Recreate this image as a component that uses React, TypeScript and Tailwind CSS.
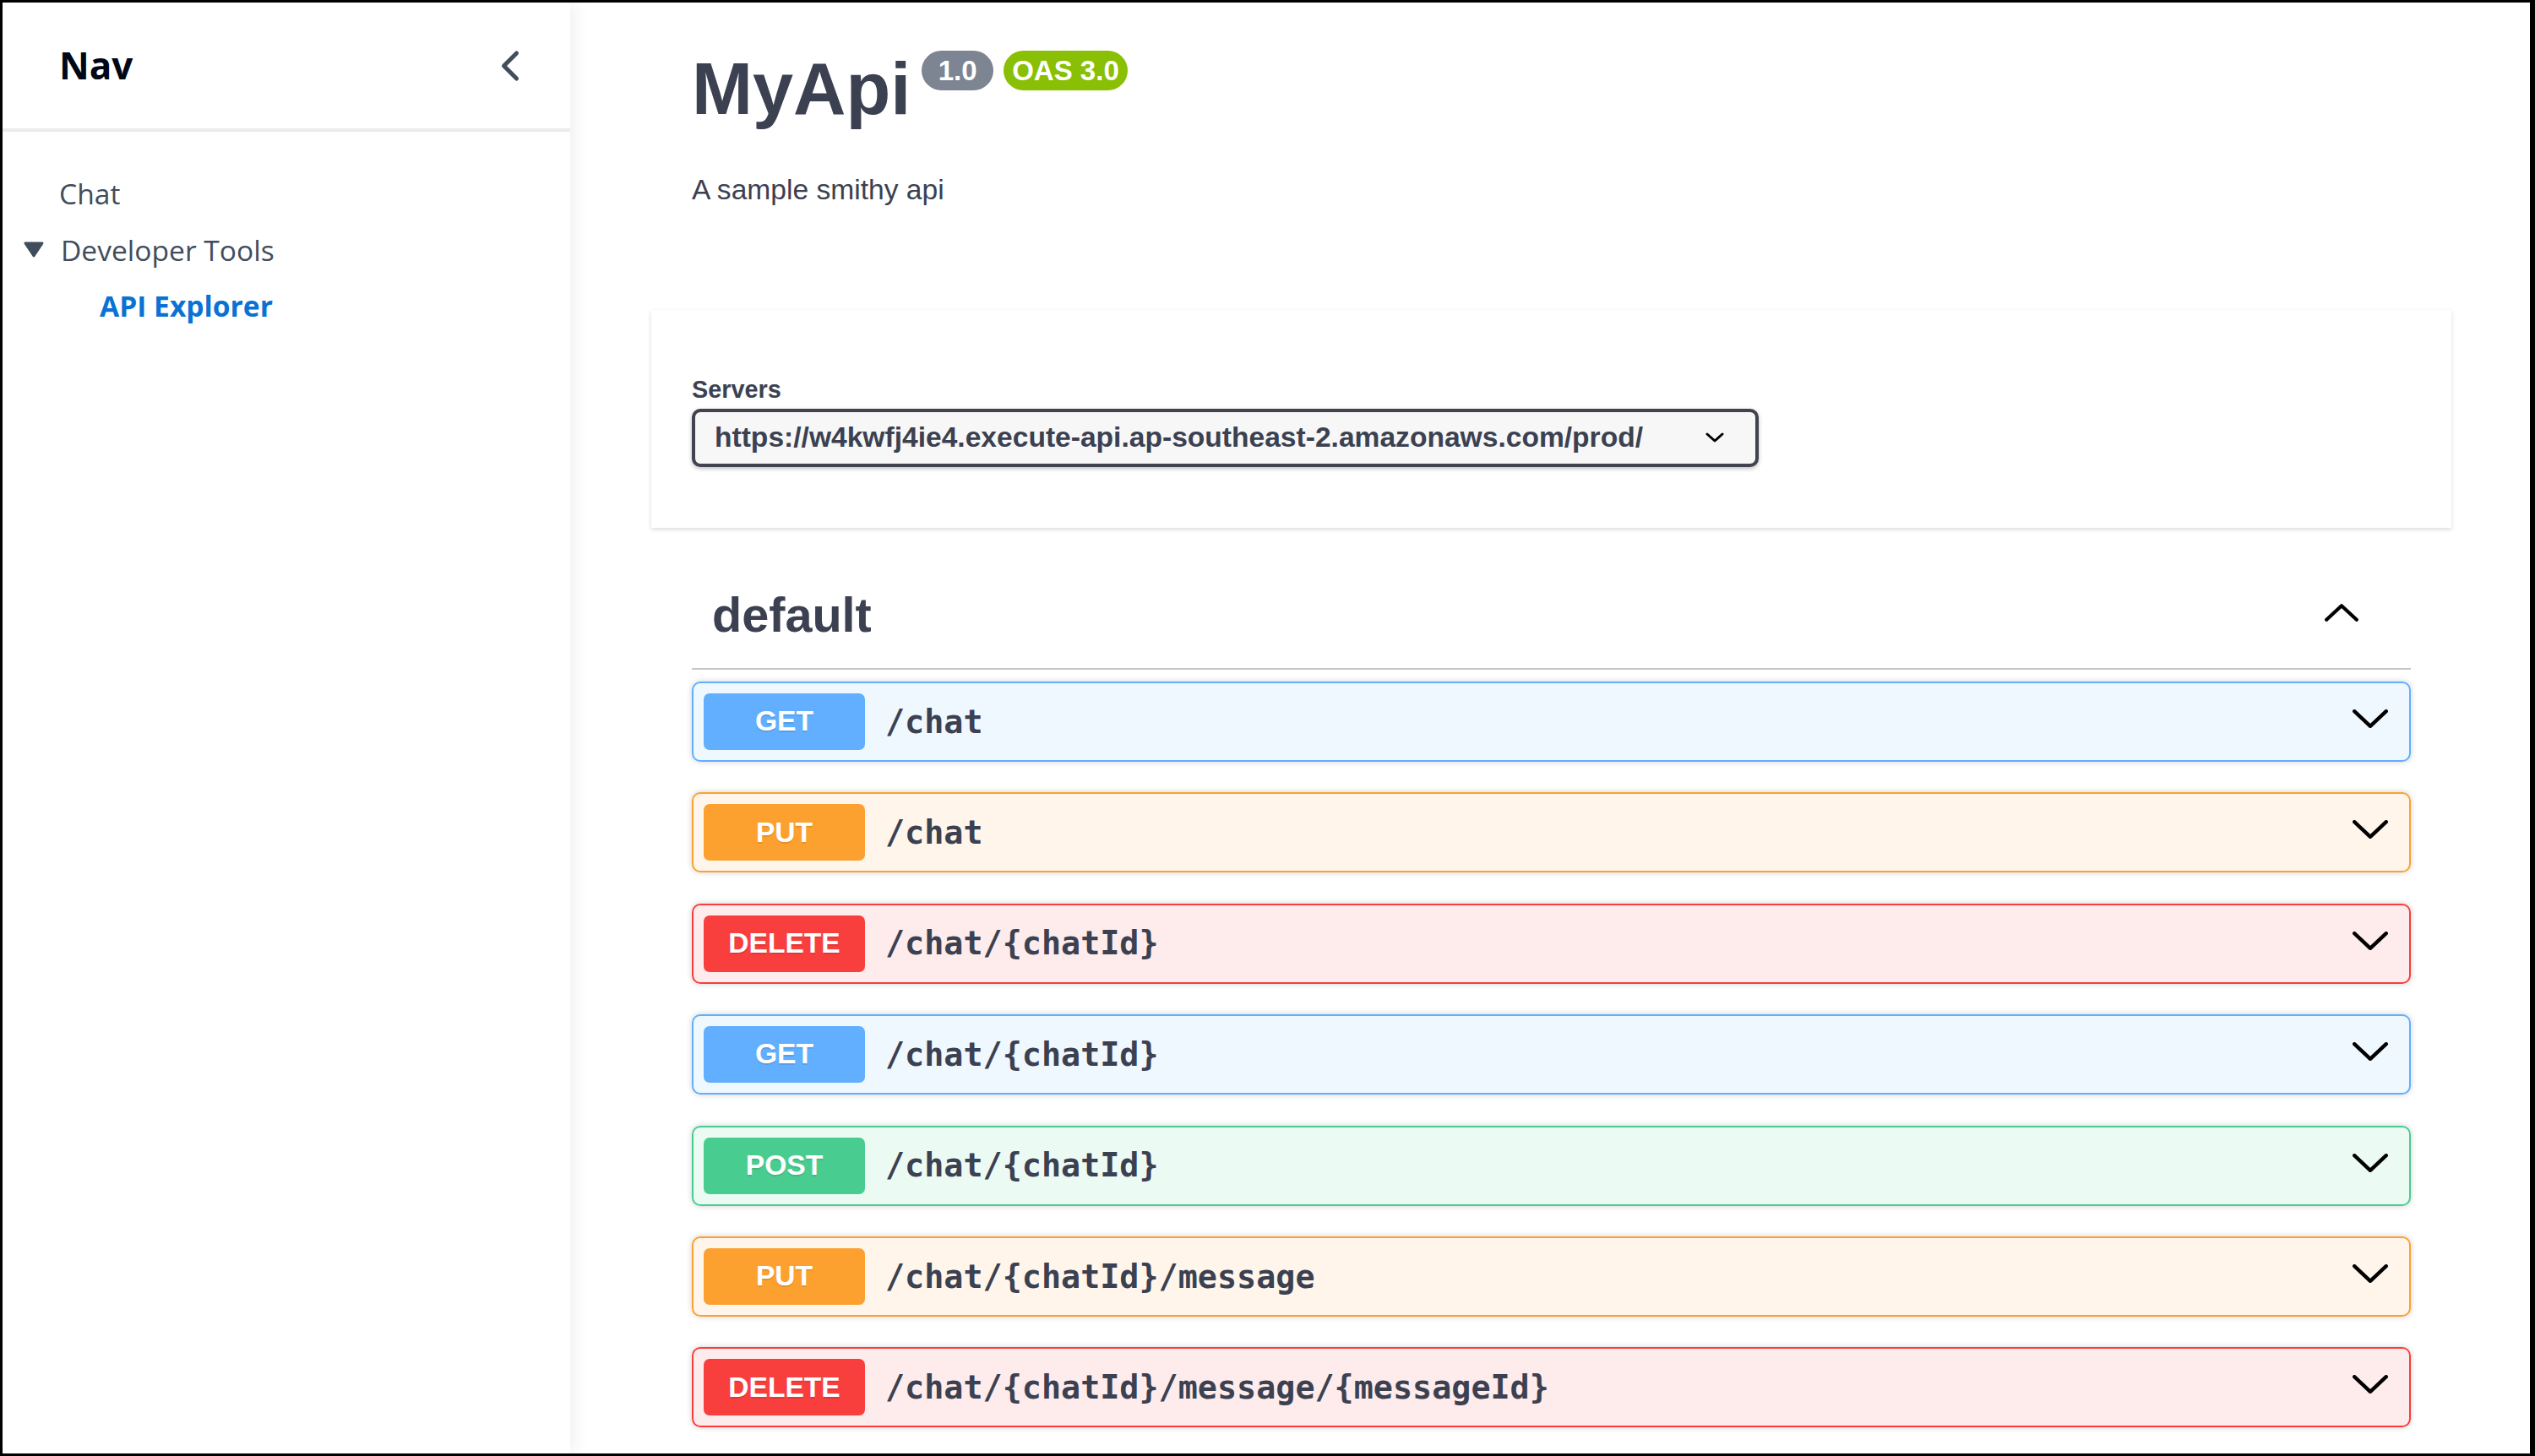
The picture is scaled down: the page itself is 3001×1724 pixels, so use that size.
import React from "react";

type Op = { method: "GET" | "PUT" | "DELETE" | "POST"; path: string };

const ops: Op[] = [
  { method: "GET", path: "/chat" },
  { method: "PUT", path: "/chat" },
  { method: "DELETE", path: "/chat/{chatId}" },
  { method: "GET", path: "/chat/{chatId}" },
  { method: "POST", path: "/chat/{chatId}" },
  { method: "PUT", path: "/chat/{chatId}/message" },
  { method: "DELETE", path: "/chat/{chatId}/message/{messageId}" },
];

const look = {
  GET: { box: "border-[#61affe] bg-[rgba(97,175,254,0.1)]", badge: "bg-[#61affe]" },
  PUT: { box: "border-[#fca130] bg-[rgba(252,161,48,0.1)]", badge: "bg-[#fca130]" },
  DELETE: { box: "border-[#f93e3e] bg-[rgba(249,62,62,0.1)]", badge: "bg-[#f93e3e]" },
  POST: { box: "border-[#49cc90] bg-[rgba(73,204,144,0.1)]", badge: "bg-[#49cc90]" },
};

const Sidebar = () => {
  return (
    <div className="w-[672px] shrink-0 h-full bg-white shadow-[6px_0_18px_rgba(0,7,22,0.06)] z-10 font-['Open_Sans',sans-serif]">
      <div className="h-[149px] flex items-center justify-between pl-[67px] pr-[51px]">
        <p className="text-[44px] leading-[52.8px] font-bold text-[#000716]">Nav</p>
        <svg width="40" height="40" viewBox="0 0 16 16" fill="none">
          <polyline points="11 2 5 8 11 14" stroke="#414d5c" strokeWidth="2" strokeLinecap="round" strokeLinejoin="round" />
        </svg>
      </div>
      <div className="h-[4px] bg-[#e9ebed]" />
      <div className="pt-[53px] flex flex-col gap-[26.5px] text-[33.6px] leading-[40px] text-[#414d5c]">
        <p className="pl-[67px]">Chat</p>
        <div className="flex items-center pl-[25px]">
          <svg width="24" height="19" viewBox="0 0 24 19" className="mr-[20px]">
            <path d="M2 2 H22 L12 17 Z" fill="#414d5c" stroke="#414d5c" strokeWidth="3" strokeLinejoin="round" />
          </svg>
          <p>Developer Tools</p>
        </div>
        <p className="pl-[115px] font-bold text-[#0972d3]">API Explorer</p>
      </div>
    </div>
  );
};

const OpBlock = ({ op }: { op: Op }) => {
  const s = look[op.method];
  return (
    <div className={`border-2 rounded-[10px] shadow-[0_0_7px_rgba(0,0,0,0.19)] ${s.box}`}>
      <div className="flex items-center p-[12px]">
        <div
          className={`w-[191px] h-[67px] rounded-[7px] flex items-center justify-center text-white font-bold text-[33.6px] [text-shadow:0_2px_0_rgba(0,0,0,0.1)] ${s.badge}`}
        >
          {op.method}
        </div>
        <p className="flex-1 pl-[24px] font-['DejaVu_Sans_Mono',monospace] font-bold text-[38.4px] text-[#3b4151]">
          {op.path}
        </p>
        <svg width="42" height="22" viewBox="0 0 42 22" fill="none" className="self-start mt-[19px] mr-[13px]">
          <polyline points="2.2,2.2 21,19.8 39.8,2.2" stroke="#000" strokeWidth="4.4" strokeLinecap="round" strokeLinejoin="round" />
        </svg>
      </div>
    </div>
  );
};

export default function App() {
  return (
    <div className="w-[3001px] h-[1724px] overflow-hidden border-t-[3px] border-l-[3px] border-b-[3px] border-r-[6px] border-black bg-white flex">
      <Sidebar />
      <div className="flex-1 pl-[96px] pr-[93px] font-['Liberation_Sans',Arial,sans-serif] text-[#3b4151]">
        <div className="px-[48px] pt-[57px]">
          <div className="flex items-start">
            <h2 className="mt-[2px] text-[86.4px] leading-[86.4px] font-bold">MyApi</h2>
            <span className="ml-[13px] w-[85px] h-[47px] rounded-full bg-[#7d8492] text-white font-bold text-[33px] flex items-center justify-center">
              1.0
            </span>
            <span className="ml-[12px] h-[47px] px-[10px] rounded-full bg-[#89bf04] text-white font-bold text-[33px] flex items-center">
              OAS 3.0
            </span>
          </div>
          <p className="mt-[57.6px] text-[33.6px] leading-[38.6px]">A sample smithy api</p>
        </div>

        <div className="mt-[122.4px] bg-white shadow-[0_2px_5px_rgba(0,0,0,0.15)] px-[48px] pt-[72px] pb-[72px]">
          <p className="pt-[6px] mb-[6px] text-[28.8px] leading-[33px] font-bold">Servers</p>
          <div className="w-[1263px] h-[69px] border-4 border-[#41444e] rounded-[10px] bg-[#f7f7f7] shadow-[0_2px_5px_rgba(0,0,0,0.25)] flex items-center justify-between pl-[23px]">
            <span className="text-[33.6px] font-bold">https://w4kwfj4ie4.execute-api.ap-southeast-2.amazonaws.com/prod/</span>
            <svg width="22" height="12" viewBox="0 0 22 12" fill="none" className="mr-[37px]">
              <polyline points="2,2 11,10 20,2" stroke="#000" strokeWidth="3" strokeLinecap="round" strokeLinejoin="round" />
            </svg>
          </div>
        </div>

        <div className="px-[48px]">
          <div className="mt-[34px] h-[134px] border-b-2 border-[#c4c6cb] flex items-center justify-between">
            <h3 className="pl-[24px] pt-[6px] text-[57.6px] font-bold">default</h3>
            <svg width="40" height="21" viewBox="0 0 40 21" fill="none" className="mr-[62px] mt-[2px]">
              <polyline points="2.2,18.8 20,2.2 37.8,18.8" stroke="#000" strokeWidth="4.2" strokeLinecap="round" strokeLinejoin="round" />
            </svg>
          </div>
          <div className="mt-[14px] flex flex-col gap-[36.4px]">
            {ops.map((op, i) => (
              <OpBlock key={i} op={op} />
            ))}
          </div>
        </div>
      </div>
    </div>
  );
}
